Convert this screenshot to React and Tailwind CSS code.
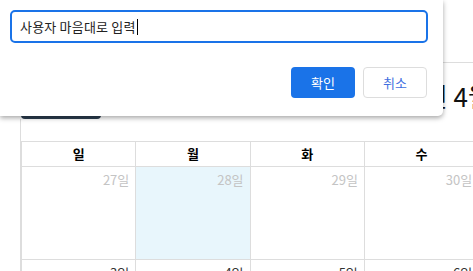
import React from "react";

const font = { fontFamily: '"Noto Sans CJK KR", "Noto Sans", sans-serif' };

const days = ["일", "월", "화", "수", "목", "금", "토"];
const row1 = [
  { d: "27일", other: true },
  { d: "28일", other: true, today: true },
  { d: "29일", other: true },
  { d: "30일", other: true },
  { d: "31일", other: true },
  { d: "1일" },
  { d: "2일" },
];
const row2 = ["3일", "4일", "5일", "6일", "7일", "8일", "9일"];

export default function App() {
  return (
    <div
      className="relative w-[473px] h-[271px] overflow-hidden bg-white text-[#333]"
      style={font}
    >
      {/* page header */}
      <div className="h-[63px] w-[900px] border-b border-[#dddddd]" />

      {/* toolbar */}
      <div className="mt-[22px] flex h-[34px] items-start pl-[21px] w-[900px]">
        <div className="h-[34px] w-[80px] rounded-[4px] bg-[#2c3e50]" />
        <div className="ml-[265px] -mt-[2px] whitespace-nowrap text-[26px] leading-none text-[#111]">
          2024년 4월
        </div>
      </div>

      {/* calendar */}
      <div className="ml-[20px] border-l border-[#dddddd] pt-[22px] w-[900px]">
        <div className="grid w-[800px] grid-cols-7">
          {days.map((d) => (
            <div
              key={d}
              className="flex h-[25px] items-center justify-center border-l border-t border-[#dddddd] text-[13px] font-bold text-black"
            >
              {d}
            </div>
          ))}
          {row1.map((c) => (
            <div
              key={c.d}
              className={
                "h-[93px] border-l border-t border-[#dddddd] pr-[6px] pt-[4px] text-right text-[13px] leading-[18px] " +
                (c.today ? "bg-[#e8f6fc] " : "") +
                (c.other ? "text-[#c4c4c4]" : "text-[#333]")
              }
            >
              {c.d}
            </div>
          ))}
          {row2.map((d) => (
            <div
              key={d}
              className="h-[93px] border-l border-t border-[#dddddd] pr-[6px] pt-[4px] text-right text-[13px] leading-[18px] text-[#333]"
            >
              {d}
            </div>
          ))}
        </div>
      </div>

      {/* modal */}
      <div className="absolute left-0 top-0 w-[443px] rounded-br-[5px] bg-white pb-[18px] pl-[10px] pr-[15px] pt-[10px] shadow-[0_2px_5px_rgba(0,0,0,0.35)]">
        <div className="flex h-[33px] items-center rounded-[5px] border-2 border-[#1a73e8] pl-[8px] text-[13px] text-[#222]">
          <span className="whitespace-nowrap tracking-[0.2px]">사용자 마음대로 입력</span>
          <span className="ml-[1px] inline-block h-[16px] w-px bg-black" />
        </div>
        <div className="mt-[24px] flex justify-end gap-[8px] pr-px">
          <button className="h-[31px] w-[64px] rounded-[4px] bg-[#1a73e8] text-[13px] text-white">
            확인
          </button>
          <button className="h-[31px] w-[64px] rounded-[4px] border border-[#dddddd] bg-white text-[13px] text-[#3f6fe0]">
            취소
          </button>
        </div>
      </div>
    </div>
  );
}
